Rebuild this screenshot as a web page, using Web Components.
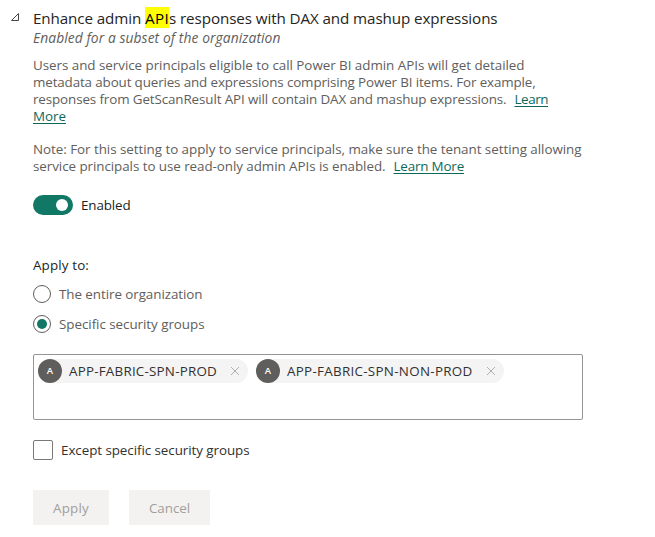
<!DOCTYPE html>
<html lang="en"><head><meta charset="utf-8"><title>Tenant setting</title>
<style>
html,body{margin:0;background:#fff}
body{font-family:"Open Sans","Noto Sans",sans-serif;font-size:13.4px;line-height:17px;color:#605e5c}
</style></head><body>
<tenant-setting></tenant-setting>
<script>
const define = (name, html, setup) => customElements.define(name, class extends HTMLElement {
  connectedCallback() {
    if (this.shadowRoot) return;
    const t = document.createElement('template');
    t.innerHTML = html;
    this.attachShadow({mode: 'open'}).append(t.content.cloneNode(true));
    if (setup) setup(this, this.shadowRoot);
  }
});

// A run of text tracked so that it fills the width given in its "w" attribute.
define('fit-text', `<style>:host{display:inline-block;white-space:pre;flex:none}</style><slot></slot>`, el => {
  const w = parseFloat(el.getAttribute('w'));
  const natural = el.getBoundingClientRect().width;
  el.style.letterSpacing = ((w - natural) / el.textContent.length) + 'px';
  el.style.width = w + 'px';
});

define('setting-header', `<style>
:host{display:grid;grid-template-columns:23px 1fr;padding:7px 0 0 10px}
svg{display:block;margin-top:5px}
.title{display:flex;height:21px;line-height:22px;font-size:15.2px;color:#252423}
mark{display:block;height:21px;background:#ff0;color:#000}
.sub{font-style:italic;font-size:13.8px;height:20px;line-height:20px}
</style>
<svg width="11" height="11" viewBox="0 0 11 11"><path d="M1.5 8.5 8.5 1.5V8.5Z" fill="none" stroke="#484644"/></svg>
<div><div class="title"><fit-text w="112">Enhance admin </fit-text><mark><fit-text w="24">API</fit-text></mark><fit-text w="328.5">s responses with DAX and mashup expressions</fit-text></div>
<div class="sub"><fit-text w="247.5">Enabled for a subset of the organization</fit-text></div></div>`);

define('learn-link', `<style>:host{display:block;color:#0c695a}
::slotted(*){text-decoration:underline;text-underline-offset:2px;text-decoration-thickness:1px;text-decoration-skip-ink:none}</style><slot></slot>`);

define('setting-description', `<style>
:host{display:flex;flex-direction:column;gap:16px;padding:9px 0 0 33px}
.line{display:flex;height:17px}
.gap{gap:8px}
</style>
<div><div class="line"><fit-text w="491.5">Users and service principals eligible to call Power BI admin APIs will get detailed</fit-text></div>
<div class="line"><fit-text w="502.5">metadata about queries and expressions comprising Power BI items. For example,</fit-text></div>
<div class="line gap"><fit-text w="473.5">responses from GetScanResult API will contain DAX and mashup expressions.</fit-text><learn-link><fit-text w="33.5">Learn</fit-text></learn-link></div>
<div class="line"><learn-link><fit-text w="33">More</fit-text></learn-link></div></div>
<div><div class="line"><fit-text w="548.5">Note: For this setting to apply to service principals, make sure the tenant setting allowing</fit-text></div>
<div class="line gap"><fit-text w="352.5">service principals to use read-only admin APIs is enabled.</fit-text><learn-link><fit-text w="70.5">Learn More</fit-text></learn-link></div></div>`);

define('toggle-switch', `<style>
:host{display:flex;align-items:center;gap:8px;height:20px;color:#201f1e}
i{display:flex;align-items:center;justify-content:flex-end;box-sizing:border-box;width:40px;height:20px;padding-right:5px;border-radius:10px;background:#117865}
i::after{content:"";width:12px;height:12px;border-radius:50%;background:#fff}
</style><i></i><slot></slot>`);

define('radio-option', `<style>
:host{display:flex;align-items:center;gap:8px;height:18px}
i{display:grid;place-items:center;box-sizing:border-box;width:18px;height:18px;border:1px solid #605e5c;border-radius:50%}
:host([checked]) i::after{content:"";width:10px;height:10px;border-radius:50%;background:#117865}
</style><i></i><slot></slot>`);

define('group-chip', `<style>
:host{display:flex;align-items:center;box-sizing:border-box;height:24px;padding-right:8px;border-radius:12px;background:#f4f4f4;color:#323130}
b{display:grid;place-items:center;width:24px;height:24px;margin-right:7px;border-radius:50%;background:#605e5c;color:#fff;font-size:9.5px;font-weight:600;line-height:24px}
svg{margin-left:13px}
</style><b>A</b><slot></slot><svg width="10" height="10" viewBox="0 0 10 10"><path d="M1 1 9 9M9 1 1 9" stroke="#b0aeac" fill="none"/></svg>`);

define('group-picker', `<style>
:host{display:flex;align-items:flex-start;gap:8px;box-sizing:border-box;width:550px;height:66px;padding:4px;border:1px solid #979593;border-radius:2px}
</style><slot></slot>`);

define('check-box', `<style>
:host{display:flex;align-items:center;gap:8px;height:20px;color:#323130}
i{box-sizing:border-box;width:20px;height:20px;border:1px solid #7a7876;border-radius:2px}
</style><i></i><slot></slot>`);

define('action-button', `<style>
:host{display:flex;align-items:center;justify-content:center;box-sizing:border-box;height:35px;padding:1px 20px 0;background:#f3f2f1;color:#a19f9d}
</style><slot></slot>`);

define('tenant-setting', `<style>
:host{display:block;width:655px;height:537px}
.body{padding-left:33px}
toggle-switch{margin-top:20px}
.label{height:18px;margin-top:41px;line-height:18px;color:#201f1e}
.radios{display:flex;flex-direction:column;gap:12px;margin-top:11px}
group-picker{margin-top:21px}
check-box{margin-top:20px}
.actions{display:flex;gap:20px;margin-top:30px}
</style>
<setting-header></setting-header>
<setting-description></setting-description>
<div class="body">
<toggle-switch><fit-text w="49.5">Enabled</fit-text></toggle-switch>
<div class="label"><fit-text w="56">Apply to:</fit-text></div>
<div class="radios"><radio-option><fit-text w="143.5">The entire organization</fit-text></radio-option><radio-option checked><fit-text w="145.5">Specific security groups</fit-text></radio-option></div>
<group-picker><group-chip><fit-text w="148">APP-FABRIC-SPN-PROD</fit-text></group-chip><group-chip><fit-text w="185.5">APP-FABRIC-SPN-NON-PROD</fit-text></group-chip></group-picker>
<check-box><fit-text w="188.5">Except specific security groups</fit-text></check-box>
<div class="actions"><action-button><fit-text w="36">Apply</fit-text></action-button><action-button><fit-text w="41">Cancel</fit-text></action-button></div>
</div>`);
</script>
</body></html>
